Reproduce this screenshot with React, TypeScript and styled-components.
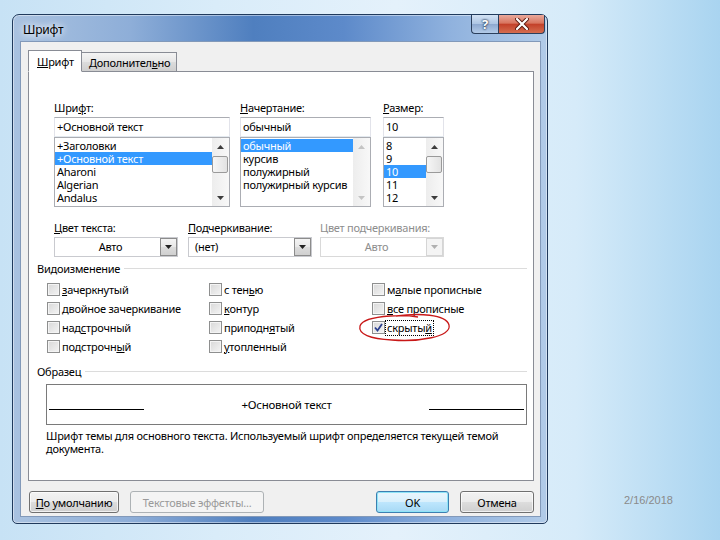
import React from "react";
import styled, { createGlobalStyle, css } from "styled-components";

const GlobalStyle = createGlobalStyle`
  html, body {
    margin: 0;
    padding: 0;
  }
  body {
    width: 720px;
    height: 540px;
    overflow: hidden;
    font-family: "Noto Sans", "Open Sans", sans-serif;
    font-size: 11px;
    letter-spacing: -0.25px;
    color: #000;
  }
  * {
    box-sizing: border-box;
  }
`;

const FONTS = ["+Заголовки", "+Основной текст", "Aharoni", "Algerian", "Andalus"];
const STYLES = ["обычный", "курсив", "полужирный", "полужирный курсив"];
const SIZES = ["8", "9", "10", "11", "12"];

const App: React.FC = () => {
  return (
    <SPage>
      <GlobalStyle />
      <SWindow>
        <STitleBar>
          <STitle>Шрифт</STitle>
          <SCaptionGroup>
            <SHelpButton>?</SHelpButton>
            <SCloseButton>
              <svg width="14" height="12" viewBox="0 0 14 12">
                <path d="M2 1 L12 11 M12 1 L2 11" stroke="#5a1a10" strokeWidth="4" strokeLinecap="round" />
                <path d="M2 1 L12 11 M12 1 L2 11" stroke="#fff" strokeWidth="2.2" strokeLinecap="round" />
              </svg>
            </SCloseButton>
          </SCaptionGroup>
        </STitleBar>

        <SClient>
          <STabStrip>
            <STab $active>
              <u>Ш</u>рифт
            </STab>
            <STab>
              Дополнител<u>ь</u>но
            </STab>
          </STabStrip>

          <SPanel>
            <STopGrid>
              <SField>
                <SLabel>
                  Шри<u>ф</u>т:
                </SLabel>
                <STextBox $w={176}>+Основной текст</STextBox>
                <SListBox $w={176}>
                  <SListItems>
                    {FONTS.map((f, i) => (
                      <SListItem key={f} $selected={i === 1}>
                        {f}
                      </SListItem>
                    ))}
                  </SListItems>
                  <ScrollBar thumbTop={18} />
                </SListBox>
              </SField>
              <SField>
                <SLabel>
                  <u>Н</u>ачертание:
                </SLabel>
                <STextBox $w={131}>обычный</STextBox>
                <SListBox $w={131}>
                  <SListItems>
                    {STYLES.map((s, i) => (
                      <SListItem key={s} $selected={i === 0}>
                        {s}
                      </SListItem>
                    ))}
                  </SListItems>
                  <ScrollBar disabled />
                </SListBox>
              </SField>
              <SField>
                <SLabel>
                  <u>Р</u>азмер:
                </SLabel>
                <STextBox $w={61}>10</STextBox>
                <SListBox $w={61}>
                  <SListItems>
                    {SIZES.map((s, i) => (
                      <SListItem key={s} $selected={i === 2}>
                        {s}
                      </SListItem>
                    ))}
                  </SListItems>
                  <ScrollBar thumbTop={18} />
                </SListBox>
              </SField>
            </STopGrid>

            <SComboRow>
              <SField>
                <SLabel>
                  <u>Ц</u>вет текста:
                </SLabel>
                <Combo value="Авто" center />
              </SField>
              <SField>
                <SLabel>
                  <u>П</u>одчеркивание:
                </SLabel>
                <Combo value="(нет)" />
              </SField>
              <SField>
                <SLabel $disabled>Цвет подчеркивания:</SLabel>
                <Combo value="Авто" center disabled />
              </SField>
            </SComboRow>

            <SGroupHeader>Видоизменение</SGroupHeader>
            <SCheckGrid>
              <CheckItem label={<><u>з</u>ачеркнутый</>} />
              <CheckItem label={<>с тен<u>ь</u>ю</>} />
              <CheckItem label={<>м<u>а</u>лые прописные</>} />
              <CheckItem label={<><u>д</u>войное зачеркивание</>} />
              <CheckItem label={<><u>к</u>онтур</>} />
              <CheckItem label={<><u>в</u>се прописные</>} />
              <CheckItem label={<>над<u>с</u>трочный</>} />
              <CheckItem label={<>приподн<u>я</u>тый</>} />
              <SCheckCell>
                <SMarkCircle width="98" height="32" viewBox="0 0 98 32">
                  <path
                    d="M40 4 C62 1, 90 2, 93 13 C96 25, 62 30, 36 28 C14 27, 2 22, 4 14 C6 7, 20 5, 34 4 C46 3, 56 4, 62 5"
                    fill="none"
                    stroke="#c81818"
                    strokeWidth="1.3"
                  />
                </SMarkCircle>
                <SCheckBox $checked>
                  <svg width="9" height="9" viewBox="0 0 9 9">
                    <path d="M1 4.5 L3.5 7.5 L8 1" fill="none" stroke="#2a3f8f" strokeWidth="1.8" />
                  </svg>
                </SCheckBox>
                <SCheckLabel $focused>
                  скрыты<u>й</u>
                </SCheckLabel>
              </SCheckCell>
              <CheckItem label={<>подстрочн<u>ы</u>й</>} />
              <CheckItem label={<><u>у</u>топленный</>} />
            </SCheckGrid>

            <SGroupHeader $sample>Образец</SGroupHeader>
            <SPreview>
              <SPreviewLine />
              <SPreviewText>+Основной текст</SPreviewText>
              <SPreviewLine $right />
            </SPreview>
            <SDescription>
              Шрифт темы для основного текста. Используемый шрифт определяется текущей темой
              <br />
              документа.
            </SDescription>
          </SPanel>

          <SButtonRow>
            <SButtonGroup>
              <SButton $w={90}>
                <u>П</u>о умолчанию
              </SButton>
              <SButton $w={134} $disabled>
                Текстовые эффекты...
              </SButton>
            </SButtonGroup>
            <SButtonGroup>
              <SButton $w={73} $default>
                OK
              </SButton>
              <SButton $w={74}>Отмена</SButton>
            </SButtonGroup>
          </SButtonRow>
        </SClient>
      </SWindow>
      <SDate>2/16/2018</SDate>
    </SPage>
  );
};

const ScrollBar: React.FC<{ thumbTop?: number; disabled?: boolean }> = ({ thumbTop, disabled }) => {
  const color = disabled ? "#c4c4c4" : "#3c3c3c";
  return (
    <SScrollBar>
      <SArrow>
        <svg width="7" height="4" viewBox="0 0 7 4">
          <path d="M0 4 L3.5 0 L7 4 Z" fill={color} />
        </svg>
      </SArrow>
      <STrack>{thumbTop !== undefined && <SThumb style={{ top: thumbTop - 17 }} />}</STrack>
      <SArrow>
        <svg width="7" height="4" viewBox="0 0 7 4">
          <path d="M0 0 L3.5 4 L7 0 Z" fill={color} />
        </svg>
      </SArrow>
    </SScrollBar>
  );
};

const Combo: React.FC<{ value: string; center?: boolean; disabled?: boolean }> = ({ value, center, disabled }) => (
  <SCombo $disabled={disabled}>
    <SComboText $center={center}>{value}</SComboText>
    <SComboButton $disabled={disabled}>
      <svg width="7" height="4" viewBox="0 0 7 4">
        <path d="M0 0 L3.5 4 L7 0 Z" fill={disabled ? "#b0b0b0" : "#222"} />
      </svg>
    </SComboButton>
  </SCombo>
);

const CheckItem: React.FC<{ label: React.ReactNode }> = ({ label }) => (
  <SCheckCell>
    <SCheckBox />
    <SCheckLabel>{label}</SCheckLabel>
  </SCheckCell>
);

const SPage = styled.div`
  width: 720px;
  height: 540px;
  display: flex;
  align-items: flex-start;
  padding: 14px 0 0 12px;
  background: linear-gradient(90deg, #c7e2f5 0%, #d9ecf9 30%, #e4f1fb 55%, #d6ebf9 80%, #a9d4f0 100%);
`;

const SWindow = styled.div`
  width: 536px;
  height: 510px;
  display: flex;
  flex-direction: column;
  padding: 0 6px 6px 7px;
  border: 1px solid #203a5c;
  border-radius: 7px 7px 5px 5px;
  background: linear-gradient(90deg, #a9c2e0 0%, #8eaed8 22%, #4f7fbf 45%, #5d8aca 62%, #90b2de 82%, #b1cbe8 100%);
  box-shadow: inset 0 0 0 1px rgba(255, 255, 255, 0.45);
`;

const STitleBar = styled.div`
  height: 26px;
  display: flex;
  justify-content: space-between;
  align-items: flex-start;
`;

const STitle = styled.div`
  padding: 6px 0 0 3px;
  font-size: 12px;
  text-shadow: 0 0 6px #fff, 0 0 10px #fff;
`;

const SCaptionGroup = styled.div`
  display: flex;
  margin-right: -4px;
`;

const captionBase = css`
  height: 19px;
  display: flex;
  align-items: center;
  justify-content: center;
  border: 1px solid #2b3f5c;
  border-top: none;
`;

const SHelpButton = styled.div`
  ${captionBase};
  width: 27px;
  border-right: none;
  border-radius: 0 0 0 4px;
  background: linear-gradient(#d3e2f3 0%, #aec6e4 48%, #8ea9d0 52%, #b3cbe8 100%);
  color: #fff;
  font-weight: bold;
  font-size: 13px;
  text-shadow: 0 0 2px #1c2f4c, 0 0 2px #1c2f4c;
`;

const SCloseButton = styled.div`
  ${captionBase};
  width: 47px;
  border-radius: 0 0 4px 0;
  background: linear-gradient(#e9a99c 0%, #d8755f 45%, #c3412a 52%, #d56d4f 100%);
`;

const SClient = styled.div`
  flex: 1;
  display: flex;
  flex-direction: column;
  padding: 8px 6px 0 7px;
  background: #f0f0f0;
  border: 1px solid #8299b9;
`;

const STabStrip = styled.div`
  display: flex;
  align-items: flex-end;
  height: 22px;
  margin-bottom: -1px;
  position: relative;
  z-index: 1;
`;

const STab = styled.div<{ $active?: boolean }>`
  display: flex;
  align-items: center;
  border: 1px solid #898c95;
  white-space: nowrap;
  ${({ $active }) =>
    $active
      ? css`
          height: 22px;
          width: 54px;
          padding-left: 8px;
          background: #fff;
          border-bottom-color: #fff;
        `
      : css`
          height: 20px;
          width: 95px;
          padding-left: 7px;
          border-left: none;
          background: linear-gradient(#f4f4f4, #e6e6e6 50%, #dcdcdc 51%, #cfcfcf);
        `}
`;

const SPanel = styled.div`
  width: 506px;
  height: 410px;
  padding-top: 28px;
  background: #fff;
  border: 1px solid #898c95;
`;

const STopGrid = styled.div`
  display: grid;
  grid-template-columns: 186px 143px 61px;
  padding-left: 25px;
`;

const SComboRow = styled.div`
  display: grid;
  grid-template-columns: 134px 132px 124px;
  padding-left: 25px;
  margin-top: 13px;
`;

const SField = styled.div`
  display: flex;
  flex-direction: column;
`;

const SLabel = styled.div<{ $disabled?: boolean }>`
  height: 15px;
  line-height: 15px;
  margin-bottom: 2px;
  white-space: nowrap;
  color: ${({ $disabled }) => ($disabled ? "#8d8d8d" : "#000")};
`;

const boxBorder = css`
  border: 1px solid #e2e3ea;
  border-top-color: #abadb3;
  border-bottom-color: #e3e9ef;
`;

const STextBox = styled.div<{ $w: number }>`
  width: ${({ $w }) => $w}px;
  height: 20px;
  line-height: 18px;
  padding-left: 2px;
  ${boxBorder};
`;

const SListBox = styled.div<{ $w: number }>`
  width: ${({ $w }) => $w}px;
  height: 70px;
  display: flex;
  ${boxBorder};
  border-color: #abadb3;
`;

const SListItems = styled.div`
  flex: 1;
  padding-top: 1px;
`;

const SListItem = styled.div<{ $selected?: boolean }>`
  height: 13px;
  line-height: 13px;
  padding-left: 2px;
  white-space: nowrap;
  background: ${({ $selected }) => ($selected ? "#3399ff" : "transparent")};
  color: ${({ $selected }) => ($selected ? "#fff" : "#000")};
`;

const SScrollBar = styled.div`
  width: 17px;
  display: flex;
  flex-direction: column;
  background: linear-gradient(90deg, #ededed, #f8f8f8);
`;

const SArrow = styled.div`
  height: 17px;
  display: flex;
  align-items: center;
  justify-content: center;
`;

const STrack = styled.div`
  flex: 1;
  position: relative;
`;

const SThumb = styled.div`
  position: absolute;
  left: 0;
  width: 16px;
  height: 17px;
  border: 1px solid #9a9a9a;
  border-radius: 2px;
  background: linear-gradient(90deg, #f6f6f6, #e2e2e2);
`;

const SCombo = styled.div<{ $disabled?: boolean }>`
  width: 124px;
  height: 20px;
  display: flex;
  border: 1px solid ${({ $disabled }) => ($disabled ? "#d9d9d9" : "#c9cacf")};
  background: #fff;
  color: ${({ $disabled }) => ($disabled ? "#8d8d8d" : "#000")};
`;

const SComboText = styled.div<{ $center?: boolean }>`
  flex: 1;
  line-height: 18px;
  padding-left: 6px;
  text-align: ${({ $center }) => ($center ? "center" : "left")};
`;

const SComboButton = styled.div<{ $disabled?: boolean }>`
  width: 17px;
  display: flex;
  align-items: center;
  justify-content: center;
  border: 1px solid ${({ $disabled }) => ($disabled ? "#d5d5d5" : "#8c8c8c")};
  background: ${({ $disabled }) =>
    $disabled ? "#f4f4f4" : "linear-gradient(#f4f4f4, #e8e8e8 50%, #dcdcdc 51%, #d0d0d0)"};
`;

const SGroupHeader = styled.div<{ $sample?: boolean }>`
  display: flex;
  align-items: center;
  gap: 4px;
  height: 15px;
  margin: ${({ $sample }) => ($sample ? "8px" : "4px")} 6px 0 8px;

  &::after {
    content: "";
    flex: 1;
    height: 1px;
    background: #dcdcdc;
    box-shadow: 0 1px 0 #fff;
  }
`;

const SCheckGrid = styled.div`
  display: grid;
  grid-template-columns: 162px 163px 1fr;
  grid-auto-rows: 19px;
  padding-left: 18px;
  margin-top: 4px;
`;

const SCheckCell = styled.div`
  display: flex;
  align-items: center;
  position: relative;
`;

const SCheckBox = styled.div<{ $checked?: boolean }>`
  width: 13px;
  height: 13px;
  display: flex;
  align-items: center;
  justify-content: center;
  border: 1px solid #8e8f8f;
  background: linear-gradient(135deg, #d8d8d8, #f4f4f4);
  box-shadow: inset 0 0 0 1px #f4f4f4;
`;

const SCheckLabel = styled.span<{ $focused?: boolean }>`
  padding: 0 1px;
  line-height: 14px;
  white-space: nowrap;
  border: 1px dotted ${({ $focused }) => ($focused ? "#000" : "transparent")};
`;

const SMarkCircle = styled.svg`
  position: absolute;
  left: -16px;
  top: -6px;
  pointer-events: none;
`;

const SPreview = styled.div`
  width: 481px;
  height: 41px;
  margin: 5px 0 0 17px;
  padding: 0 2px;
  display: grid;
  grid-template-columns: 1fr auto 1fr;
  align-items: center;
  border: 1px solid #7a7a7a;
`;

const SPreviewLine = styled.div<{ $right?: boolean }>`
  width: 95px;
  height: 1px;
  background: #000;
  align-self: start;
  margin-top: 24px;
  justify-self: ${({ $right }) => ($right ? "end" : "start")};
`;

const SPreviewText = styled.div`
  font-size: 11.5px;
`;

const SDescription = styled.div`
  margin: 4px 0 0 17px;
  line-height: 13px;
`;

const SButtonRow = styled.div`
  display: flex;
  justify-content: space-between;
  margin: 10px 0 0 1px;
  width: 505px;
`;

const SButtonGroup = styled.div`
  display: flex;
  gap: 11px;
`;

const SButton = styled.div<{ $w: number; $disabled?: boolean; $default?: boolean }>`
  width: ${({ $w }) => $w}px;
  height: 22px;
  display: flex;
  align-items: center;
  justify-content: center;
  white-space: nowrap;
  border-radius: 3px;
  border: 1px solid #707070;
  background: linear-gradient(#f2f2f2 0%, #ebebeb 50%, #dddddd 51%, #cfcfcf 100%);
  box-shadow: inset 0 0 0 1px rgba(255, 255, 255, 0.7);
  ${({ $disabled }) =>
    $disabled &&
    css`
      border-color: #adb2b5;
      background: #f4f4f4;
      color: #9a9a9a;
      box-shadow: none;
    `}
  ${({ $default }) =>
    $default &&
    css`
      border-color: #3c7fb1;
      box-shadow: inset 0 0 0 1px #8fe4f6;
      background: linear-gradient(#eaf6fd 0%, #d9f0fc 50%, #bee6fd 51%, #a7d9f5 100%);
    `}
`;

const SDate = styled.div`
  align-self: flex-end;
  margin: 0 0 34px 76px;
  font-size: 11px;
  letter-spacing: 0;
  color: #8a8a8a;
  font-family: "Liberation Sans", Arial, sans-serif;
`;

export default App;
